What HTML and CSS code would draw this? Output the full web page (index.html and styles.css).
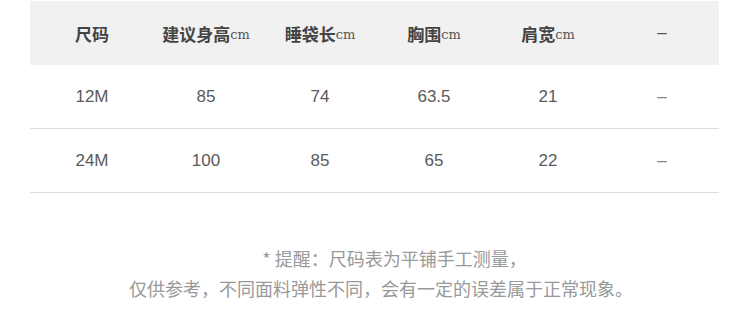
FILE: index.html
```html
<!DOCTYPE html>
<html lang="zh-CN">
<head>
<meta charset="utf-8">
<title>尺码表</title>
<link rel="stylesheet" href="styles.css">
</head>
<body>
<div class="size-table">
  <div class="row head">
    <div class="cell">尺码</div>
    <div class="cell">建议身高<span class="unit">cm</span></div>
    <div class="cell">睡袋长<span class="unit">cm</span></div>
    <div class="cell">胸围<span class="unit">cm</span></div>
    <div class="cell">肩宽<span class="unit">cm</span></div>
    <div class="cell dash">–</div>
  </div>
  <div class="row body">
    <div class="cell">12M</div>
    <div class="cell">85</div>
    <div class="cell">74</div>
    <div class="cell">63.5</div>
    <div class="cell">21</div>
    <div class="cell dash">–</div>
  </div>
  <div class="row body">
    <div class="cell">24M</div>
    <div class="cell">100</div>
    <div class="cell">85</div>
    <div class="cell">65</div>
    <div class="cell">22</div>
    <div class="cell dash">–</div>
  </div>
</div>
<div class="note">
  <div class="note-line first">* 提醒：尺码表为平铺手工测量，</div>
  <div class="note-line">仅供参考，不同面料弹性不同，会有一定的误差属于正常现象。</div>
</div>
</body>
</html>
```

FILE: styles.css
```css
html, body {
  margin: 0;
  padding: 0;
  background: #ffffff;
}

.size-table {
  width: 689px;
  margin: 1px 0 0 30px;
}

.row {
  display: grid;
  grid-template-columns: repeat(6, 114px);
  padding-left: 5px;
}

.cell {
  display: flex;
  align-items: center;
  justify-content: center;
  white-space: nowrap;
}

.head {
  height: 64px;
  background: #f1f1f1;
  font-family: "Noto Sans CJK SC", sans-serif;
  font-weight: 700;
  font-size: 17px;
  color: #444444;
}

.head .unit {
  font-family: "DejaVu Serif", serif;
  font-weight: 400;
  font-size: 13px;
  color: #555555;
  margin-top: 3px;
}

.head .dash {
  font-family: "Liberation Sans", sans-serif;
  font-weight: 400;
  font-size: 17px;
  color: #555555;
}

.body {
  height: 63px;
  border-bottom: 1px solid #dddddd;
  font-family: "Liberation Sans", Arial, sans-serif;
  font-size: 17px;
  color: #5a5a5a;
}

.body .dash {
  color: #888888;
}

.note {
  margin-top: 51px;
  padding-left: 12px;
  font-family: "Noto Sans CJK SC", sans-serif;
  font-size: 18px;
  line-height: 29.5px;
  color: #999999;
  text-align: center;
}

.note-line.first {
  padding-left: 27px;
}
```
